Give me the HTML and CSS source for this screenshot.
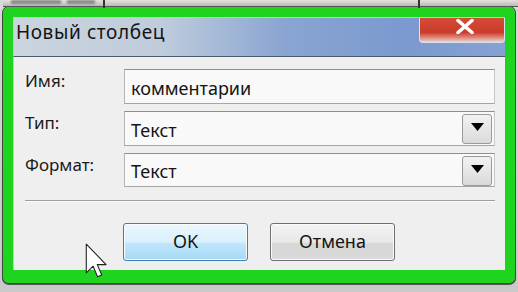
FILE: index.html
```html
<!DOCTYPE html>
<html lang="ru">
<head>
<meta charset="utf-8">
<link rel="stylesheet" href="styles.css">
</head>
<body>
<div class="screen">
  <div class="backdrop">
    <span class="smudge s1"></span>
    <span class="smudge s2"></span>
    <span class="vline v1"></span>
    <span class="vline v2"></span>
  </div>
  <div class="window">
    <div class="titlebar">
      <span class="title">Новый столбец</span>
      <div class="close">
        <svg width="22" height="15" viewBox="0 0 22 15"><path d="M4 1.5 L18 13.5 M18 1.5 L4 13.5" stroke="#fff" stroke-width="3.6" stroke-linecap="round" fill="none"/></svg>
      </div>
    </div>
    <div class="content">
      <div class="form">
        <span class="label">Имя:</span>
        <div class="field">комментарии</div>
        <span class="label">Тип:</span>
        <div class="field combo"><span>Текст</span><span class="drop"><svg width="13" height="8" viewBox="0 0 13 8"><path d="M0 0 H13 L6.5 8 Z" fill="#000"/></svg></span></div>
        <span class="label">Формат:</span>
        <div class="field combo"><span>Текст</span><span class="drop"><svg width="13" height="8" viewBox="0 0 13 8"><path d="M0 0 H13 L6.5 8 Z" fill="#000"/></svg></span></div>
      </div>
      <div class="sep"></div>
      <div class="buttons">
        <button class="btn ok">OK</button>
        <button class="btn">Отмена</button>
      </div>
    </div>
  </div>
  <svg class="cursor" width="22" height="36" viewBox="0 0 12 20"><path d="M0.6 0.6 L0.6 16.6 L4.4 12.9 L6.9 18.8 L9.2 17.8 L6.7 12 L11.6 12 Z" fill="#fff" stroke="#222" stroke-width="0.6" stroke-linejoin="round"/></svg>
</div>
</body>
</html>
```
FILE: styles.css
```css
* { box-sizing: border-box; }
html, body { margin: 0; padding: 0; }
body { background: #d4d4d4; font-family: "Noto Sans", "Open Sans", sans-serif; }

.screen {
  position: relative;
  width: 518px;
  height: 292px;
  overflow: hidden;
  background: linear-gradient(#d9d9d9, #c9c9c9);
  padding-left: 3px;
}

.backdrop {
  position: relative;
  height: 7px;
  background: linear-gradient(#e4e2dc, #b9b9b5);
  border-bottom: 1px solid #555;
}
.smudge {
  position: absolute;
  top: 0;
  height: 4px;
  background: #6a6a6a;
  filter: blur(1.2px);
  opacity: .7;
}
.s1 { left: 8px; width: 50px; }
.s2 { left: 64px; width: 28px; }
.vline { position: absolute; top: 0; width: 2px; height: 8px; background: #333; }
.v1 { left: 100px; }
.v2 { left: 415px; }

.window {
  width: 512px;
  height: 276px;
  border-style: solid;
  border-color: #1fd41f;
  border-width: 10px 10px 13px 10px;
  border-radius: 6px;
  box-shadow: 0 0 0 1px #3b4a3b, 0 1px 0 1px #555;
  display: flex;
  flex-direction: column;
}

.titlebar {
  height: 40px;
  display: flex;
  align-items: flex-start;
  justify-content: space-between;
  background: linear-gradient(90deg, #cbd4df 0%, #bfccdc 30%, #8aa5d2 55%, #7b99cf 80%, #86a2d4 100%);
  border-top: 1px solid #9fe89f;
  border-left: 1px solid #9fe89f;
  border-bottom: 1px solid #4c5866;
}
.title {
  padding: 1px 0 0 2px;
  font-size: 19px;
  letter-spacing: 0.6px;
  line-height: 26px;
  color: #141414;
}
.close {
  width: 86px;
  height: 25px;
  display: flex;
  align-items: flex-start;
  justify-content: center;
  padding: 1px 0 0 6px;
  background: linear-gradient(#d44c38 0%, #cc3b2b 60%, #dc8a7d 82%, #ecd3cf 100%);
  border: 1px solid #d8e0ea;
  border-top: none;
  border-radius: 0 0 4px 4px;
}

.content {
  flex: 1;
  background: #efefef;
  padding: 12px 10px 0 11px;
  border-left: 1px solid #9fe89f;
}

.form {
  display: grid;
  grid-template-columns: 99px 1fr;
  grid-template-rows: 35px 35px 34px;
  row-gap: 7px;
}
.label {
  font-size: 17px;
  line-height: 20px;
  padding-top: 2px;
  color: #1a1a1a;
}
.field {
  display: flex;
  align-items: center;
  justify-content: space-between;
  padding: 2px 2px 0 6px;
  font-size: 18px;
  color: #141414;
  background: #f9f9f9;
  border: 1px solid #9c9c9c;
  border-color: #8e8e8e #c8c8c8 #a5a5a5 #b5b5b5;
}
.drop {
  width: 30px;
  height: 30px;
  margin-top: -1px;
  display: flex;
  align-items: center;
  justify-content: center;
  padding-bottom: 4px;
  background: linear-gradient(#f2f2f2, #dadada);
  border: 1px solid #9a9a9a;
  border-radius: 3px;
}

.sep {
  margin: 13px 0 0 0;
  width: 470px;
  height: 2px;
  border-top: 1px solid #9e9e9e;
  border-bottom: 1px solid #fbfbfb;
}

.buttons {
  display: flex;
  gap: 22px;
  padding: 21px 0 0 98px;
}
.btn {
  width: 125px;
  height: 38px;
  padding: 0 0 2px;
  font-family: "Noto Sans", "Open Sans", sans-serif;
  font-size: 18px;
  color: #141414;
  background: linear-gradient(#f3f3f3 0%, #e8e8e8 50%, #d7d7d7 55%, #d9d9d9 100%);
  border: 1px solid #6f6f6f;
  border-radius: 3px;
  box-shadow: inset 0 0 0 1px #fbfbfb;
}
.btn.ok {
  background: linear-gradient(#eaf6fd 0%, #d9f0fc 50%, #bee6fd 55%, #a7d9f5 100%);
  border-color: #3c7fb1;
}

.cursor {
  position: absolute;
  left: 85px;
  top: 243px;
}
```
